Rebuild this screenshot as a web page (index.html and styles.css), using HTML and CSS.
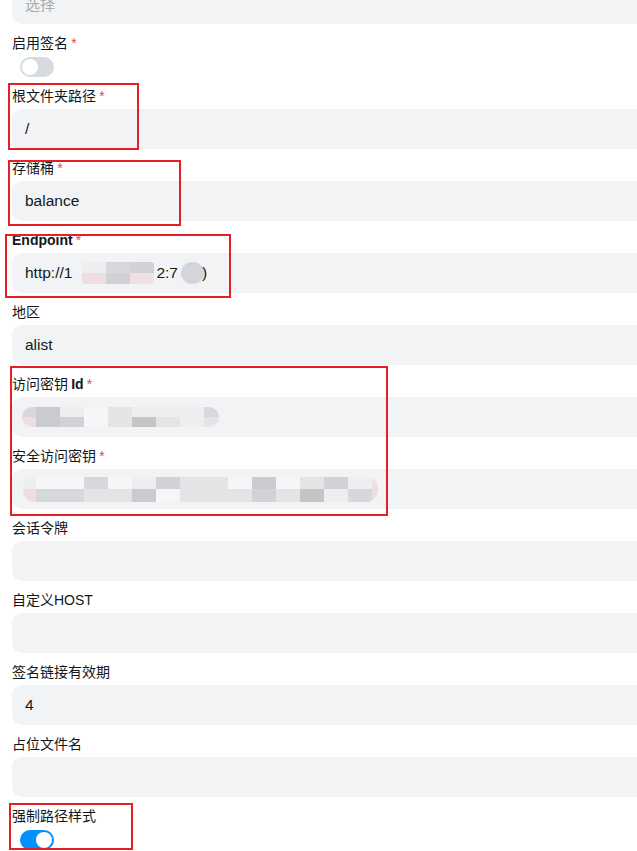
FILE: index.html
```html
<!DOCTYPE html>
<html lang="zh">
<head>
<meta charset="utf-8">
<title>存储</title>
<link rel="stylesheet" href="styles.css">
</head>
<body>
<div class="page">
  <div class="input first"><span class="placeholder">选择</span></div>

  <div class="field">
    <div class="label">启用签名 <span class="req">*</span></div>
    <div class="switch"><span class="knob"></span></div>
  </div>

  <div class="field">
    <div class="label">根文件夹路径 <span class="req">*</span></div>
    <div class="input">/</div>
  </div>

  <div class="field">
    <div class="label">存储桶 <span class="req">*</span></div>
    <div class="input">balance</div>
  </div>

  <div class="field">
    <div class="label"><span class="latin bold">Endpoint</span> <span class="req">*</span></div>
    <div class="input">http://1<span class="mosaic m-end"><span class="col"><i class="g1"></i><i class="p1"></i></span><span class="col"><i class="g3"></i><i class="g4"></i></span><span class="col"><i class="g4"></i><i class="p2"></i></span></span>2:7<span class="oval"></span><span class="paren">)</span></div>
  </div>

  <div class="field">
    <div class="label">地区</div>
    <div class="input">alist</div>
  </div>

  <div class="field">
    <div class="label">访问密钥 <span class="latin bold">Id</span> <span class="req">*</span></div>
    <div class="input"><span class="mosaic m-id"><span class="col c-part"><i class="g3"></i><i class="p1"></i></span><span class="col"><i class="g5"></i><i class="g5"></i></span><span class="col"><i class="g1"></i><i class="g4"></i></span><span class="col"><i class="g0"></i><i class="g0"></i></span><span class="col"><i class="g2"></i><i class="g2"></i></span><span class="col"><i class="g1"></i><i class="g6"></i></span><span class="col"><i class="g1"></i><i class="g2"></i></span><span class="col"><i class="g1"></i><i class="g1"></i></span><span class="col c-end"><i class="g3"></i><i class="g2"></i></span></span></div>
  </div>

  <div class="field">
    <div class="label">安全访问密钥 <span class="req">*</span></div>
    <div class="input"><span class="mosaic m-sec"><span class="col c-part"><i class="g1"></i><i class="p1"></i></span><span class="col"><i class="g0"></i><i class="g3"></i></span><span class="col"><i class="g0"></i><i class="g3"></i></span><span class="col"><i class="g3"></i><i class="g2"></i></span><span class="col"><i class="g0"></i><i class="g2"></i></span><span class="col"><i class="g1"></i><i class="g5"></i></span><span class="col"><i class="g4"></i><i class="g0"></i></span><span class="col"><i class="g2"></i><i class="g2"></i></span><span class="col"><i class="g2"></i><i class="g2"></i></span><span class="col"><i class="g0"></i><i class="g2"></i></span><span class="col"><i class="g5"></i><i class="g4"></i></span><span class="col"><i class="g0"></i><i class="g2"></i></span><span class="col"><i class="g2"></i><i class="g6"></i></span><span class="col"><i class="g4"></i><i class="g1"></i></span><span class="col"><i class="g1"></i><i class="g3"></i></span><span class="col c-tip"><i class="p1"></i><i class="p1"></i></span></span></div>
  </div>

  <div class="field">
    <div class="label">会话令牌</div>
    <div class="input"></div>
  </div>

  <div class="field">
    <div class="label">自定义<span class="latin">HOST</span></div>
    <div class="input"></div>
  </div>

  <div class="field">
    <div class="label">签名链接有效期</div>
    <div class="input">4</div>
  </div>

  <div class="field">
    <div class="label">占位文件名</div>
    <div class="input"></div>
  </div>

  <div class="field">
    <div class="label">强制路径样式</div>
    <div class="switch on"><span class="knob"></span></div>
  </div>

  <div class="mark mk1"></div>
  <div class="mark mk2"></div>
  <div class="mark mk3"></div>
  <div class="mark mk4"></div>
  <div class="mark mk5"></div>
</div>
</body>
</html>
```

FILE: styles.css
```css
html, body {
  margin: 0;
  padding: 0;
  background: #ffffff;
  overflow: hidden;
}

.page {
  position: relative;
  padding-left: 12px;
  width: 720px;
  height: 851px;
  font-family: "Liberation Sans", "Noto Sans CJK SC", sans-serif;
  color: #11181c;
  display: flex;
  flex-direction: column;
}

.field {
  display: flex;
  flex-direction: column;
  margin-top: 8px;
}

.label {
  height: 20px;
  line-height: 20px;
  font-size: 14px;
  font-weight: 400;
  margin-bottom: 4px;
  color: #11181c;
  font-family: "Noto Sans CJK SC", "Liberation Sans", sans-serif;
}

.label .latin {
  font-family: "Liberation Sans", "Noto Sans CJK SC", sans-serif;
}

.label .bold {
  font-weight: 700;
}

.req {
  color: #e5484d;
  font-family: "Liberation Sans", sans-serif;
  font-weight: 400;
  font-size: 14px;
}

.input {
  height: 40px;
  line-height: 40px;
  background: #f1f3f5;
  border-radius: 10px;
  padding-left: 13px;
  font-size: 15.5px;
  color: #11181c;
  white-space: nowrap;
  display: flex;
  align-items: center;
}

.input.first {
  margin-top: -16px;
}

.placeholder {
  color: #a5abb0;
  font-family: "Noto Sans CJK SC", sans-serif;
  font-size: 15px;
}

.switch {
  width: 34px;
  height: 20px;
  border-radius: 10px;
  background: #d7dbdf;
  margin-left: 8px;
  margin-top: 1px;
  box-sizing: border-box;
  padding: 2px;
  display: flex;
}

.switch .knob {
  width: 16px;
  height: 16px;
  border-radius: 50%;
  background: #ffffff;
}

.switch.on {
  background: #0091ff;
  justify-content: flex-end;
}

/* mosaic blur */
.mosaic {
  display: inline-flex;
  overflow: hidden;
}

.mosaic .col {
  display: flex;
  flex-direction: column;
  width: 24px;
}

.mosaic i {
  display: block;
  flex: 1;
}

.m-end {
  height: 22px;
  margin: 0 2px 0 10px;
  border-radius: 3px;
}

.m-id {
  height: 20px;
  margin-left: -3px;
  border-radius: 10px;
}

.m-id .c-part { width: 14px; }
.m-id .c-end { width: 15px; }

.m-sec {
  height: 25px;
  margin-left: -2px;
  border-radius: 12px;
}

.m-sec .c-part { width: 13px; }
.m-sec .c-tip { width: 6px; }

.g0 { background: #f5f6f7; }
.g1 { background: #eceef0; }
.g2 { background: #e2e4e6; }
.g3 { background: #d6d8db; }
.g4 { background: #d0d2d5; }
.g5 { background: #cacbcf; }
.g6 { background: #c6c4c6; }
.p1 { background: #f0dde0; }
.p2 { background: #f0e0e2; }

.oval {
  display: inline-block;
  width: 23px;
  height: 22px;
  border-radius: 11px;
  background: #d3d5d8;
  margin-left: 3px;
}

.paren {
  margin-left: -2px;
}

/* red annotation boxes */
.mark {
  position: absolute;
  border: 2px solid #e61e25;
  box-sizing: border-box;
}

.mk1 { left: 8px; top: 83px; width: 131px; height: 67px; }
.mk2 { left: 8px; top: 160px; width: 173px; height: 66px; }
.mk3 { left: 5px; top: 234px; width: 226px; height: 64px; }
.mk4 { left: 10px; top: 366px; width: 378px; height: 150px; }
.mk5 { left: 9px; top: 803px; width: 124px; height: 47px; }
```
